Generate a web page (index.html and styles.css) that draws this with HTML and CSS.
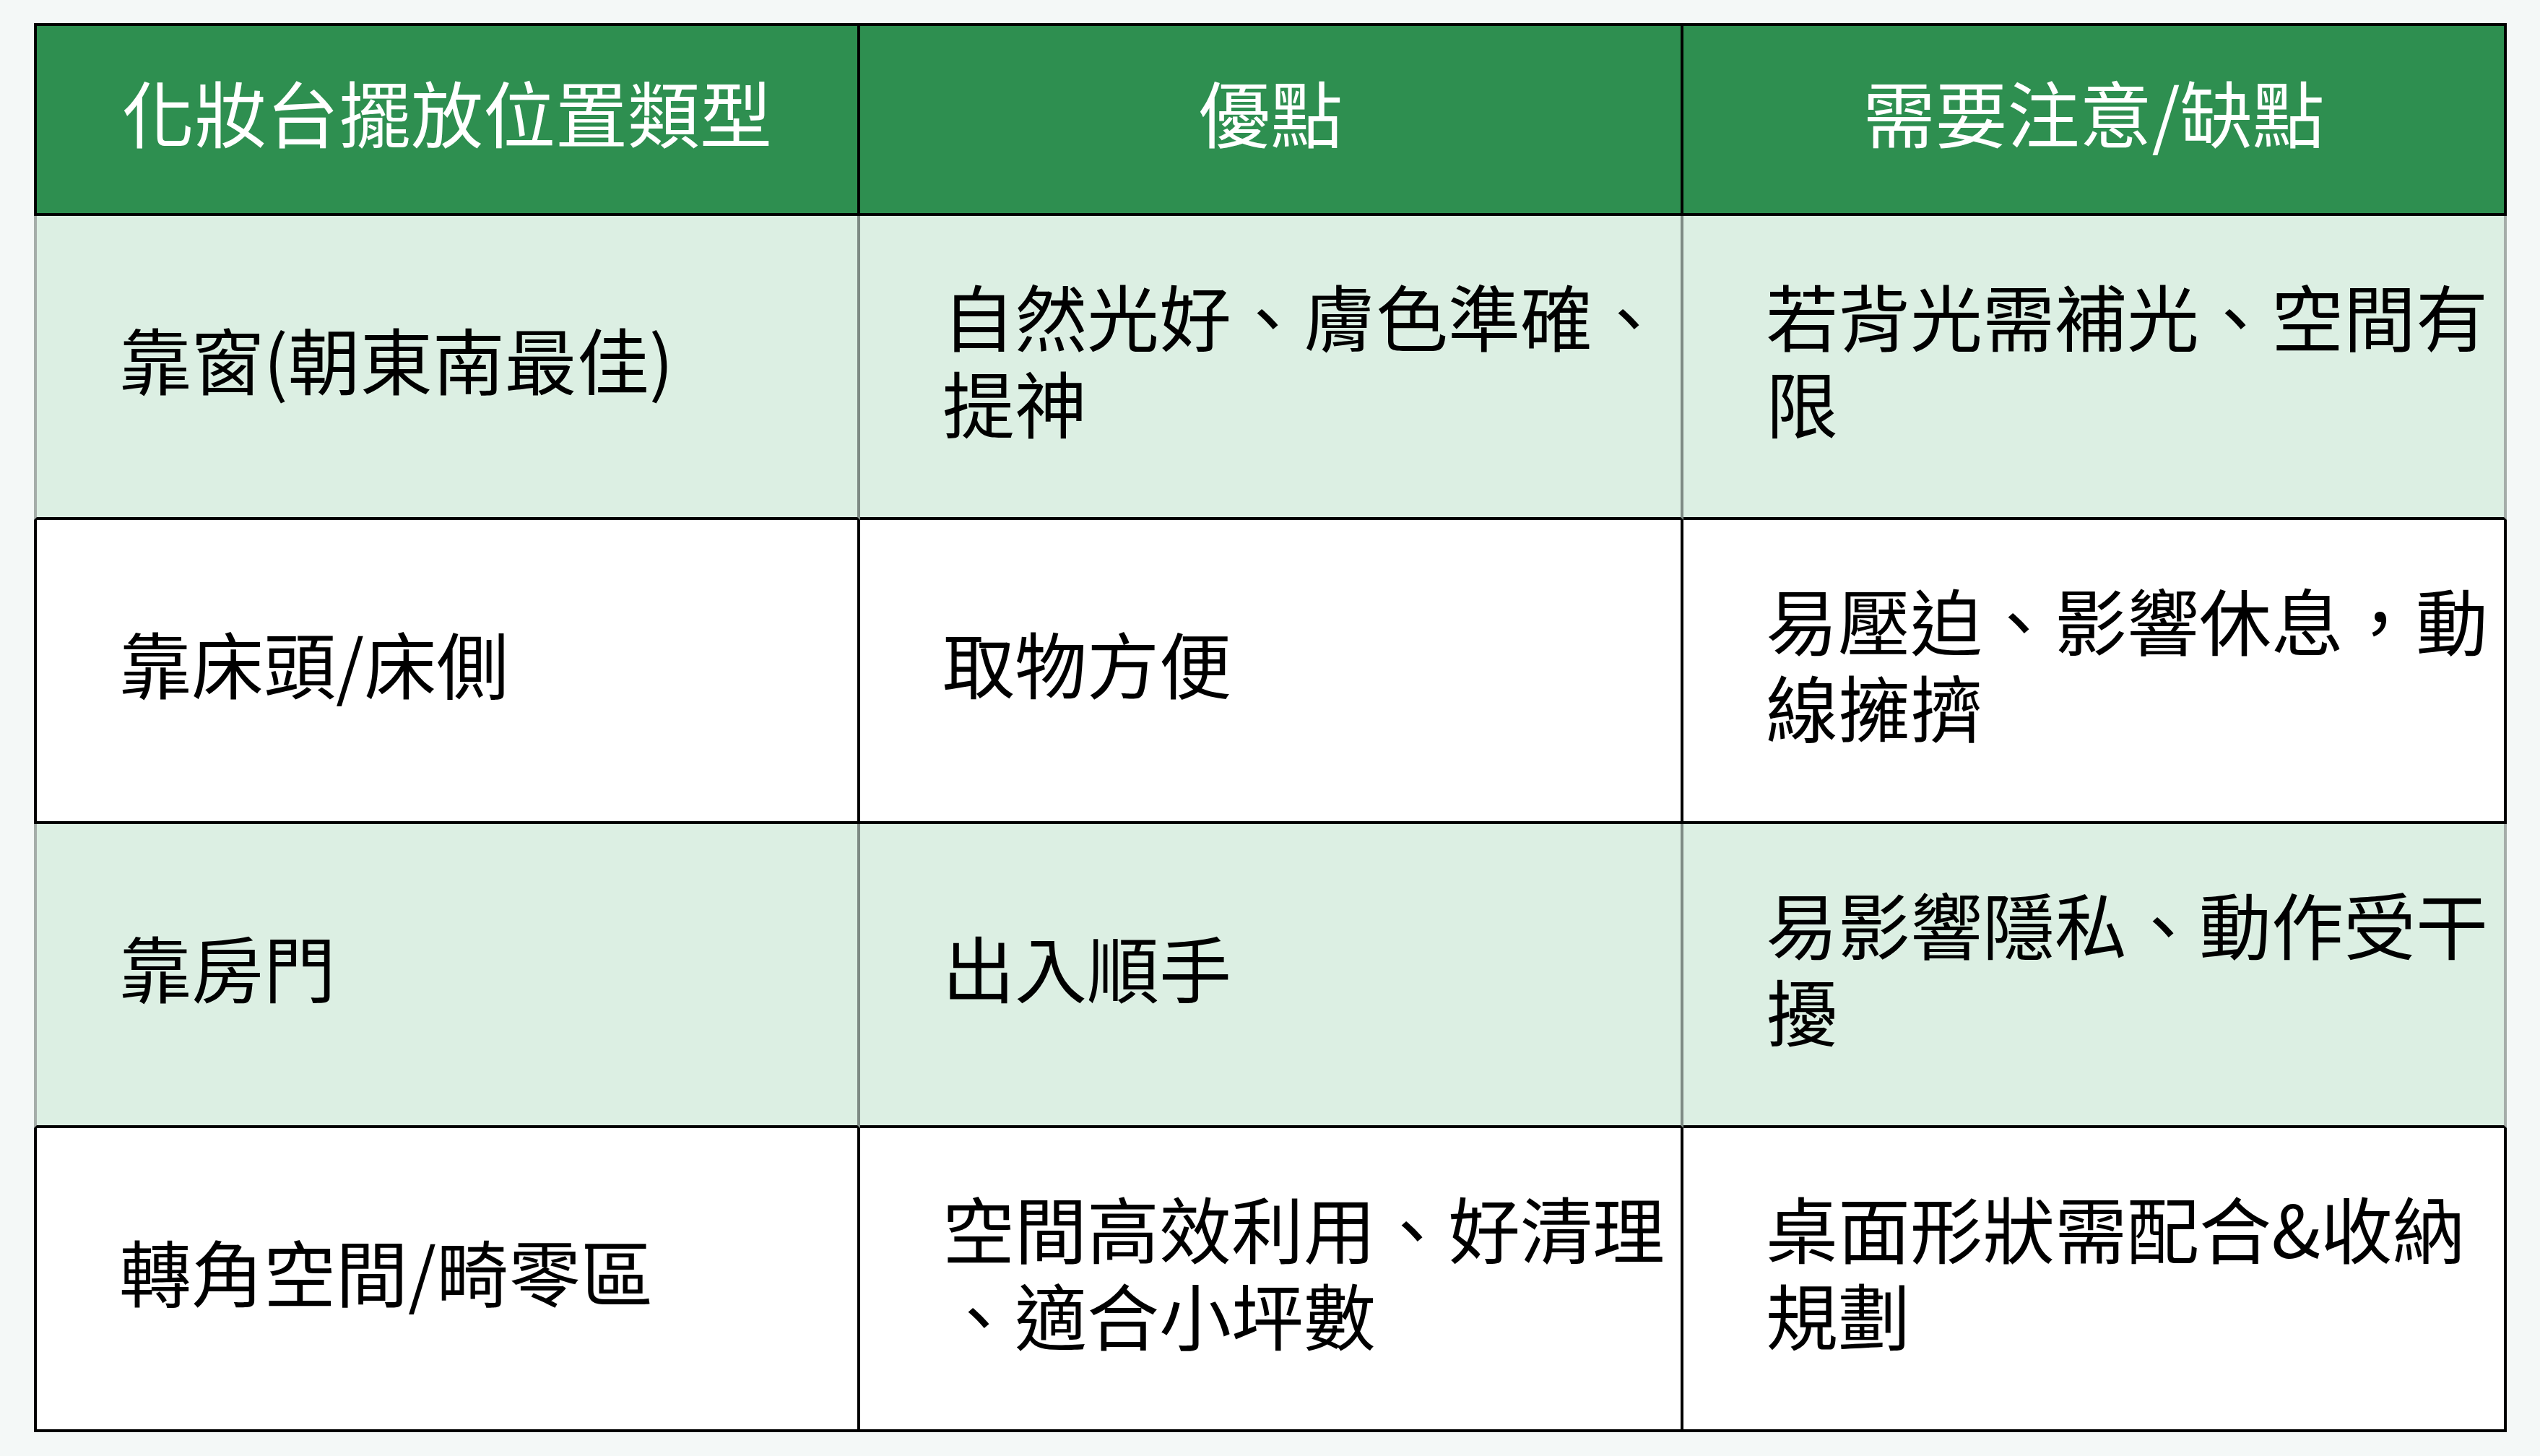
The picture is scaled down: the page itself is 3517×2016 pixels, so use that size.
FILE: index.html
```html
<!DOCTYPE html>
<html lang="zh-Hant">
<head>
<meta charset="utf-8">
<title>化妝台擺放位置類型</title>
<link rel="stylesheet" href="styles.css">
</head>
<body>
<table class="compare">
  <colgroup>
    <col class="c1"><col class="c2"><col class="c3">
  </colgroup>
  <thead>
    <tr>
      <th>化妝台擺放位置類型</th>
      <th>優點</th>
      <th>需要注意/缺點</th>
    </tr>
  </thead>
  <tbody>
    <tr class="tint">
      <td>靠窗(朝東南最佳)</td>
      <td>自然光好、膚色準確、提神</td>
      <td>若背光需補光、空間有限</td>
    </tr>
    <tr>
      <td>靠床頭/床側</td>
      <td>取物方便</td>
      <td>易壓迫、影響休息，動線擁擠</td>
    </tr>
    <tr class="tint">
      <td>靠房門</td>
      <td>出入順手</td>
      <td>易影響隱私、動作受干擾</td>
    </tr>
    <tr>
      <td>轉角空間/畸零區</td>
      <td>空間高效利用、好清理、適合小坪數</td>
      <td>桌面形狀需配合&amp;收納規劃</td>
    </tr>
  </tbody>
</table>
</body>
</html>
```

FILE: styles.css
```css
html, body {
  margin: 0;
  padding: 0;
  background: #f4f8f7;
}

body {
  padding: 32px 0 0 47px;
  font-family: "Noto Sans CJK TC", "Noto Sans CJK SC", "Noto Sans", sans-serif;
}

.compare {
  border-collapse: separate;
  border-spacing: 0;
  table-layout: fixed;
  width: 3424px;
}

.compare col {
  width: 1140px;
}
.compare col.c1 {
  width: 1144px;
}

.compare th,
.compare td {
  border-right: 4px solid #000;
  border-bottom: 4px solid #000;
  box-sizing: border-box;
  font-size: 100px;
  line-height: 120px;
  font-weight: 400;
  vertical-align: middle;
}

.compare th:first-child,
.compare td:first-child {
  border-left: 4px solid #000;
}

.compare th {
  border-top: 4px solid #000;
  background: #2e8f50;
  color: #ffffff;
  text-align: center;
  height: 267px;
  padding: 0 0 24px 0;
}

.compare td {
  height: 421px;
  padding: 0 14px 24px 114px;
  background: #ffffff;
  color: #000;
  text-align: left;
  line-break: anywhere;
  word-break: break-all;
}

.compare tr.tint td {
  background: #dcefe3;
  border-right-color: #7e8a84;
}

.compare tr.tint td:first-child {
  border-left-color: #a5ada9;
}

.compare tr.tint td:last-child {
  border-right-color: #a5ada9;
}
```
